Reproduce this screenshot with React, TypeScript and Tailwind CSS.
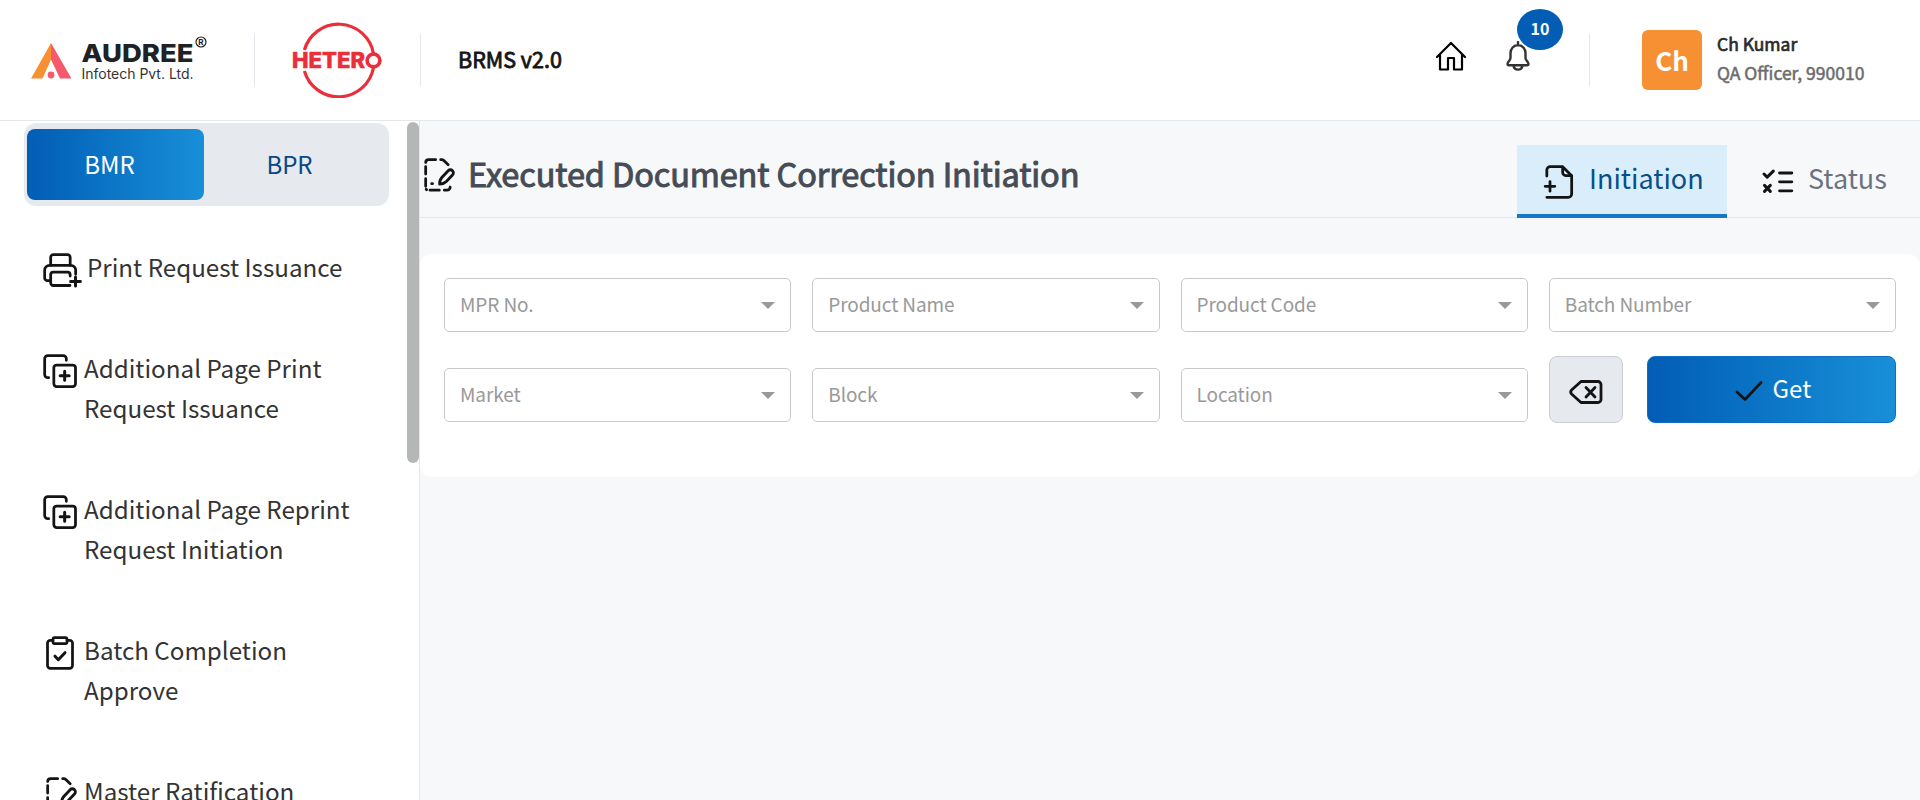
import React from "react";

type IconProps = { className?: string; children: React.ReactNode };

function Icon({ className = "size-10", children }: IconProps) {
  return (
    <svg
      viewBox="0 0 24 24"
      fill="none"
      stroke="#141414"
      strokeWidth="1.65"
      strokeLinecap="round"
      strokeLinejoin="round"
      className={"shrink-0 " + className}
    >
      {children}
    </svg>
  );
}

const PrintPlus = () => (
  <Icon className="size-10 overflow-visible">
    <path d="M6.4 9.2V4.4a1.6 1.6 0 0 1 1.6-1.6h8.5a1.6 1.6 0 0 1 1.6 1.6v4.8" />
    <path d="M21.4 14.6V12.2a3 3 0 0 0-3-3H5.8a3 3 0 0 0-3 3v4.6a1.6 1.6 0 0 0 1.6 1.6h2" />
    <path d="M18.1 15.6v-.7a1.6 1.6 0 0 0-1.6-1.6H8a1.6 1.6 0 0 0-1.6 1.6v4.8A1.6 1.6 0 0 0 8 21.3h10" />
    <path d="M21.3 16.2v5.4M18.4 18.9h5.8" strokeWidth="1.8" />
  </Icon>
);

const CopyPlus = () => (
  <Icon>
    <rect x="8.3" y="8.4" width="13" height="13" rx="1.7" />
    <path d="M15.8 5.6v-.9a1.9 1.9 0 0 0-1.9-1.9H4.7a1.9 1.9 0 0 0-1.9 1.9v9.4a1.9 1.9 0 0 0 1.9 1.9h.5" />
    <path d="M14.8 12.2v5.4M12.1 14.9h5.4" strokeWidth="1.8" />
  </Icon>
);

const ClipCheck = () => (
  <Icon>
    <path d="M7.6 4.4H6.2a1.7 1.7 0 0 0-1.7 1.7v13.4a1.7 1.7 0 0 0 1.7 1.7h11.6a1.7 1.7 0 0 0 1.7-1.7V6.1a1.7 1.7 0 0 0-1.7-1.7h-1.4" />
    <rect x="7.8" y="2.8" width="8.4" height="3.6" rx="1" />
    <path d="M9 13.9l2 2.1 4-4.2" strokeWidth="1.8" />
  </Icon>
);

const DocEdit = () => (
  <Icon>
    <path d="M4.6 4.5a1.8 1.8 0 0 1 1.8-1.7h4.2M13.6 2.8h.6a2 2 0 0 1 1.3.5l2.6 2.6M4.6 6.9v4.5M4.6 14.2v4.6M5.2 20.8l-.3-.3M7.2 21.1h5.6M15.8 21.1h1.5a2 2 0 0 0 2-1.9M8.2 17.2h.5" />
    <path
      d="M13 17.5c-.1-1.7.3-2.9 1.3-4l3.8-4.1a1.8 1.8 0 0 1 2.6 2.6l-3.7 3.9c-1 1-2.3 1.5-4 1.6z"
      strokeWidth="1.7"
    />
  </Icon>
);

const DocPlus = () => (
  <Icon className="mt-1 size-10">
    <path d="M4.1 8.4V4.8a2 2 0 0 1 2-2h7.5l5.4 5.4v11a2 2 0 0 1-2 2H4.1" />
    <path d="M13.6 3v3.3a1.8 1.8 0 0 0 1.8 1.8h3.4" />
    <path d="M6 11.7v5.8M3.1 14.6h5.8" />
  </Icon>
);

const ListCheck = () => (
  <Icon className="mt-1 size-10">
    <path d="M12.9 6.6h7.4M12.9 11.9h7.4M12.9 17.3h7.4" strokeWidth="1.7" />
    <path d="M3.6 7.2l1.9 1.9 3.7-3.6M3.9 14l3.5 3.6M7.4 14l-3.5 3.6" strokeWidth="1.8" />
  </Icon>
);

const menu = [
  { icon: <PrintPlus />, lines: ["Print Request Issuance"], pad: "pl-[7px]" },
  { icon: <CopyPlus />, lines: ["Additional Page Print", "Request Issuance"], pad: "pl-1" },
  { icon: <CopyPlus />, lines: ["Additional Page Reprint", "Request Initiation"], pad: "pl-1" },
  { icon: <ClipCheck />, lines: ["Batch Completion", "Approve"], pad: "pl-1" },
  { icon: <DocEdit />, lines: ["Master Ratification"], pad: "pl-1" },
];

function Field({ label }: { label: string }) {
  return (
    <div className="flex h-[54px] items-center justify-between rounded-[5px] border border-[#c8c9cb] bg-white px-[15px] text-[19px] tracking-[-0.1px] text-[#999]">
      <span className="pb-0.5">{label}</span>
      <svg viewBox="0 0 14 7" className="h-[7px] w-[14px]">
        <path d="M0 0h14L7 7z" fill="#999" />
      </svg>
    </div>
  );
}

function Divider() {
  return <div className="h-[52px] w-px shrink-0 bg-[#e4e7ec]" />;
}

function AudreeLogo() {
  return (
    <svg viewBox="0 0 184 60" className="h-[60px] w-[184px] shrink-0">
      <path d="M21 13v16.5L12.5 48.5H1z" fill="#f79033" />
      <path d="M21 13l20.5 35.5H30L21 29.5z" fill="#f4596c" />
      <circle cx="21" cy="45" r="3.4" fill="#f4596c" />
      <text x="51.5" y="32" fontSize="25" fontWeight="800" fill="#202124" fontFamily="Inter, sans-serif" textLength="112" lengthAdjust="spacingAndGlyphs">AUDREE</text>
      <text x="51.5" y="48.5" fontSize="14" fill="#333" fontFamily="Inter, sans-serif" textLength="112" lengthAdjust="spacingAndGlyphs">Infotech Pvt. Ltd.</text>
      <circle cx="171" cy="12" r="5" fill="none" stroke="#202124" strokeWidth="1.2" />
      <text x="168.3" y="15" fontSize="8" fontWeight="700" fill="#202124" fontFamily="Inter, sans-serif">R</text>
    </svg>
  );
}

function HeteroLogo() {
  return (
    <svg viewBox="0 0 90 76" className="h-[76px] w-[90px] shrink-0">
      <g fill="none" stroke="#ea2f3b" strokeWidth="3.2">
        <path d="M12.4 28A35.5 35.5 0 0 1 81.5 31.5" />
        <path d="M12.4 49A35.5 35.5 0 0 0 81.5 45.5" />
        <circle cx="81.5" cy="38.5" r="6.4" strokeWidth="3.6" />
      </g>
      <text x="0" y="46" fontSize="21" fontWeight="800" fill="#ea2f3b" stroke="#ea2f3b" strokeWidth=".5" fontFamily="Inter, sans-serif" textLength="73" lengthAdjust="spacingAndGlyphs">HETER</text>
    </svg>
  );
}

export default function App() {
  return (
    <div className="flex h-[800px] w-full flex-col overflow-hidden bg-[#f7f8fa] font-['Noto_Sans_CJK_SC','Noto_Sans',sans-serif] text-[#333]">
      <header className="flex h-[121px] shrink-0 items-center border-b border-[#e4e7ec] bg-white pl-[30px]">
        <AudreeLogo />
        <div className="w-10" />
        <Divider />
        <div className="w-[37px]" />
        <HeteroLogo />
        <div className="w-[38px]" />
        <Divider />
        <span className="ml-[37px] pb-px text-[21.5px] text-[#141414] [-webkit-text-stroke:0.8px_#141414]">BRMS v2.0</span>
        <div className="ml-auto flex items-center">
          <svg viewBox="0 0 30 30" className="mb-[9px] h-[30px] w-[30px]" fill="none" stroke="#000" strokeWidth="2.2" strokeLinejoin="round" strokeLinecap="round">
            <path d="M1 16L15 2l14 14M4 13.5V28.5h8V17h6v11.5h8V13.5" />
          </svg>
          <div className="relative mb-2 ml-[40px] h-[30px] w-6">
            <svg viewBox="0 0 24 30" className="h-[30px] w-6" fill="none" stroke="#333" strokeWidth="2.4" strokeLinejoin="round" strokeLinecap="round">
              <path d="M12 1v3M12 4a8 8 0 0 0-7.5 8v5c0 2.5-2.800 3.500-3 6 0 .8.3 1.2 1 1.2h19c.7 0 1-.4 1-1.2-.2-2.5-3-3.5-3-6v-5A8 8 0 0 0 12 4zM7.5 25c.6 2.5 2.3 3.6 4.5 3.6s3.9-1.1 4.5-3.6" />
            </svg>
            <span className="absolute -top-8 left-[11px] flex h-[41px] w-[46px] items-center justify-center rounded-[50%] bg-[#035db5] pb-1 text-[16px] font-bold text-white">
              10
            </span>
          </div>
          <div className="w-[59px]" />
          <Divider />
          <div className="ml-[52px] flex size-[60px] items-center justify-center rounded-md bg-[#f79033] pb-0.5 text-[26px] font-bold text-white">
            Ch
          </div>
          <div className="mb-1 ml-[15px] w-[203px] text-[17.5px] leading-[29px]">
            <div className="text-[#2b2b2b] [-webkit-text-stroke:0.7px_#2b2b2b]">Ch Kumar</div>
            <div className="text-[#6b6b6b] [-webkit-text-stroke:0.5px_#6b6b6b]">QA Officer, 990010</div>
          </div>
        </div>
      </header>

      <div className="flex min-h-0 flex-1">
        <aside className="flex w-[420px] shrink-0 border-r border-[#e4e7ec] bg-white">
          <div className="w-[407px] shrink-0 overflow-hidden pt-[2px]">
            <div className="ml-6 flex h-[83px] w-[365px] items-center rounded-xl bg-[#e6e9ee] pl-[3px] text-[24px]">
              <div className="flex h-[71px] w-[177px] items-center justify-center rounded-lg bg-linear-to-r from-[#035db5] to-[#198fd8] pr-3 pb-0.5 text-white">
                BMR
              </div>
              <div className="flex flex-1 items-center justify-center pr-[14px] pb-0.5 text-[#074886]">BPR</div>
            </div>
            <nav className="mt-[41px] flex flex-col gap-[61px] pl-10 text-[24.2px] leading-10 whitespace-nowrap">
              {menu.map((m, i) => (
                <div key={i} className="flex items-start">
                  <div className="h-10 pt-[3px]">{m.icon}</div>
                  <div className={m.pad}>
                    {m.lines.map((l) => (
                      <div key={l}>{l}</div>
                    ))}
                  </div>
                </div>
              ))}
            </nav>
          </div>
          <div className="mt-px h-[341px] w-3 rounded-full bg-[#b5b7b6]" />
        </aside>

        <main className="min-w-0 flex-1">
          <div className="flex h-[97px] items-end justify-between border-b border-[#e4e7ec]">
            <div className="-ml-0.5 flex items-center pb-[20px]">
              <DocEdit />
              <h1 className="ml-2.5 pb-1 text-[32.5px] leading-[40px] tracking-[-0.13px] text-[#464c55] [-webkit-text-stroke:1px_#464c55]">
                Executed Document Correction Initiation
              </h1>
            </div>
            <div className="-mb-px flex h-[73px] text-[27px]">
              <div className="flex w-[210px] items-center border-b-4 border-[#1478c8] bg-[#daedfa] pl-[23px] text-[#074f8c]">
                <DocPlus />
                <span className="ml-[9px] pb-[3px]">Initiation</span>
              </div>
              <div className="flex w-[193px] items-center border-b-4 border-transparent pl-[31px] text-[#6b7280]">
                <ListCheck />
                <span className="ml-2.5 pb-[3px]">Status</span>
              </div>
            </div>
          </div>

          <section className="mt-9 h-[223px] rounded-xl bg-white px-6 pt-6">
            <div className="grid grid-cols-4 gap-x-[21px]">
              <Field label="MPR No." />
              <Field label="Product Name" />
              <Field label="Product Code" />
              <Field label="Batch Number" />
            </div>
            <div className="mt-6 grid grid-cols-4 items-end gap-x-[21px]">
              <div className="pb-px"><Field label="Market" /></div>
              <div className="pb-px"><Field label="Block" /></div>
              <div className="pb-px"><Field label="Location" /></div>
              <div className="flex h-[67px] gap-6">
                <button className="flex w-[74px] items-center justify-center rounded-lg border border-[#c9ccd1] bg-[#e6e9ee]">
                  <svg viewBox="0 0 34 26" className="mt-1 h-[26px] w-[34px]" fill="none" stroke="#141414" strokeWidth="2.8" strokeLinecap="round" strokeLinejoin="round">
                    <path d="M12 2.5h17a3 3 0 0 1 3 3v15a3 3 0 0 1-3 3H12L2.6 15a3 3 0 0 1 0-4z" />
                    <path d="M17 8.5l9 9.5M26 8.5L17 18" />
                  </svg>
                </button>
                <button className="flex flex-1 items-center justify-center gap-2.5 rounded-lg border border-[#0f70c0] bg-linear-to-r from-[#035db5] to-[#198fd8] pl-[3px] text-[24px] text-white">
                  <svg viewBox="0 0 28 20" className="mt-0.5 h-5 w-7" fill="none" stroke="#141414" strokeWidth="2.8" strokeLinecap="round" strokeLinejoin="round">
                    <path d="M2 11l8 7.5L26 1.5" />
                  </svg>
                  <span className="pb-[3px]">Get</span>
                </button>
              </div>
            </div>
          </section>
        </main>
      </div>
    </div>
  );
}
